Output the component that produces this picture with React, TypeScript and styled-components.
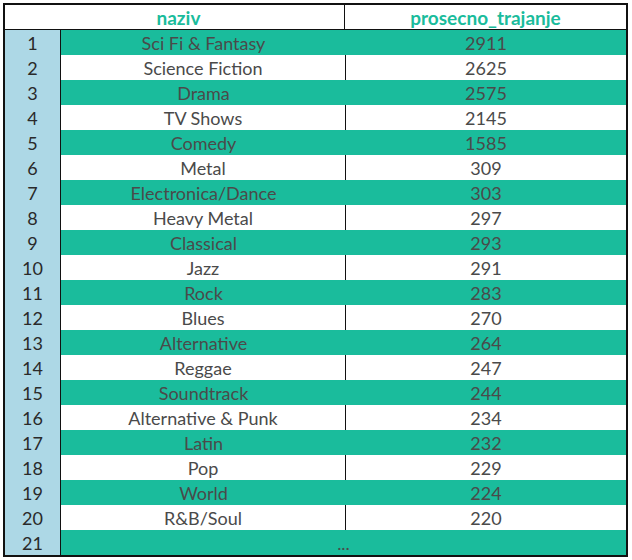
import React from 'react'
import styled, { createGlobalStyle } from 'styled-components'

const GlobalStyle = createGlobalStyle`
  body {
    margin: 0;
    background: #ffffff;
    font-family: Lato, 'Open Sans', sans-serif;
  }
`

const rows: [string, number][] = [
  ['Sci Fi & Fantasy', 2911],
  ['Science Fiction', 2625],
  ['Drama', 2575],
  ['TV Shows', 2145],
  ['Comedy', 1585],
  ['Metal', 309],
  ['Electronica/Dance', 303],
  ['Heavy Metal', 297],
  ['Classical', 293],
  ['Jazz', 291],
  ['Rock', 283],
  ['Blues', 270],
  ['Alternative', 264],
  ['Reggae', 247],
  ['Soundtrack', 244],
  ['Alternative & Punk', 234],
  ['Latin', 232],
  ['Pop', 229],
  ['World', 224],
  ['R&B/Soul', 220],
]

const Frame = styled.div`
  margin: 3px;
  width: 621px;
  border: 2px solid #111;
  font-size: 18px;
  color: #4a4a4a;
`

const HeaderRow = styled.div`
  display: grid;
  grid-template-columns: 340px 1fr;
  height: 24px;
  border-bottom: 1px solid #111;
`

const HeadCell = styled.div<{ $shift?: number; $divider?: boolean }>`
  display: flex;
  align-items: center;
  justify-content: center;
  padding-left: ${p => p.$shift ?? 0}px;
  border-right: ${p => (p.$divider ? '1px solid #111' : 'none')};
  color: #1abc9c;
  font-size: 19px;
  font-weight: 700;
`

const Row = styled.div<{ $striped: boolean }>`
  display: grid;
  grid-template-columns: 56px 285px 1fr;
  height: 25px;
  background: ${p => (p.$striped ? '#1abc9c' : '#ffffff')};
`

const Index = styled.div`
  display: flex;
  align-items: center;
  justify-content: center;
  background: #add8e6;
  border-right: 1px solid #111;
  color: #2a2a2a;
`

const Cell = styled.div<{ $divider?: boolean; $span?: boolean }>`
  display: flex;
  align-items: center;
  justify-content: center;
  grid-column: ${p => (p.$span ? 'span 2' : 'auto')};
  border-right: ${p => (p.$divider ? '1px solid #111' : 'none')};
`

const App = () => {
  return (
    <>
      <GlobalStyle />
      <Frame>
        <HeaderRow>
          <HeadCell $shift={8} $divider>naziv</HeadCell>
          <HeadCell>prosecno_trajanje</HeadCell>
        </HeaderRow>
        {rows.map(([naziv, trajanje], i) => {
          const striped = i % 2 === 0
          return (
            <Row key={naziv} $striped={striped}>
              <Index>{i + 1}</Index>
              <Cell $divider={!striped}>{naziv}</Cell>
              <Cell>{trajanje}</Cell>
            </Row>
          )
        })}
        <Row $striped>
          <Index>21</Index>
          <Cell $span>...</Cell>
        </Row>
      </Frame>
    </>
  )
}

export default App
